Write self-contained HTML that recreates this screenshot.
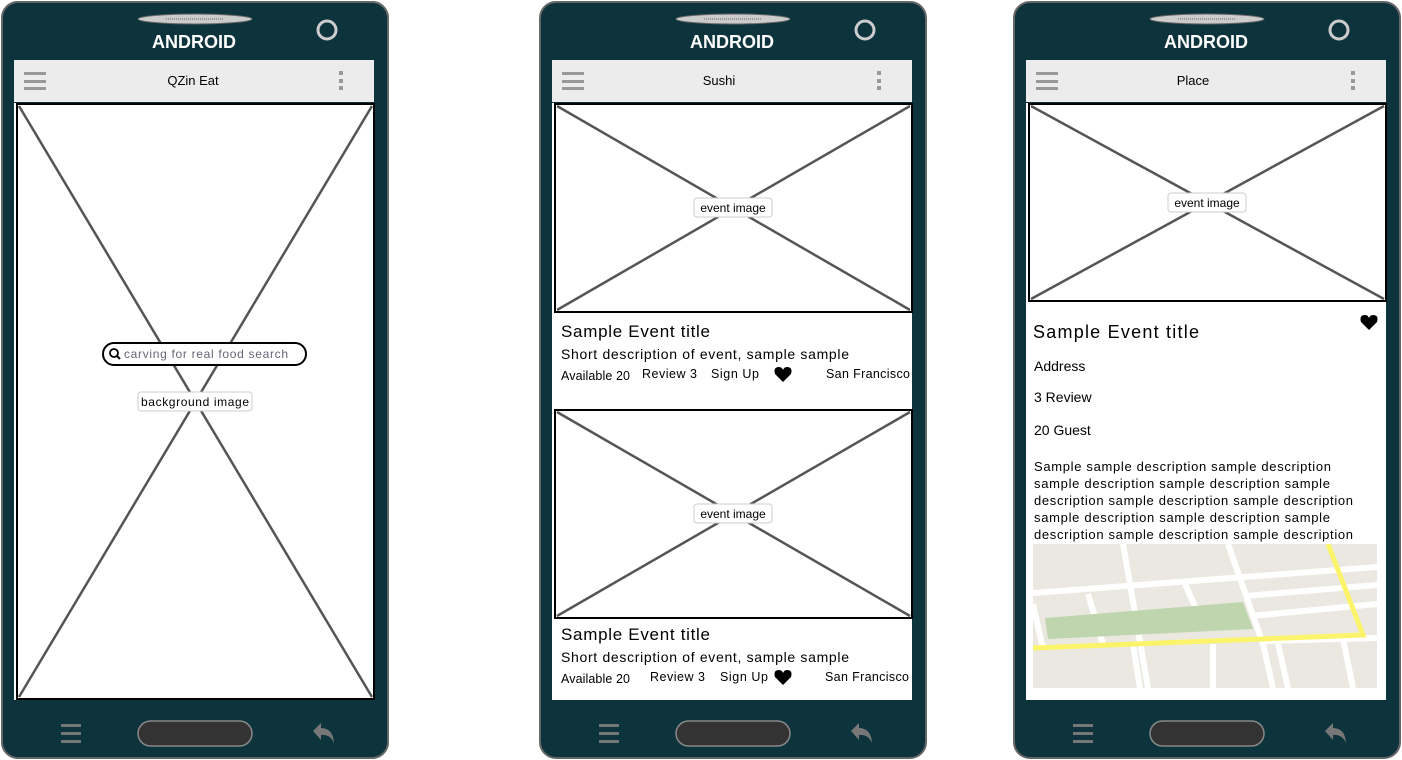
<!DOCTYPE html>
<html><head><meta charset="utf-8"><style>
html,body{margin:0;padding:0;background:#fff;}
svg{display:block;font-family:"Liberation Sans",sans-serif;}
</style></head><body>
<svg width="1402" height="760" viewBox="0 0 1402 760" xmlns="http://www.w3.org/2000/svg">
<defs>
<g id="shell">
  <rect x="1" y="2" width="386" height="756" rx="16" fill="#0d343d" stroke="#666" stroke-width="2"/>
  <ellipse cx="194" cy="19" rx="57" ry="5" fill="#ccc" stroke="#666"/>
  <line x1="165" y1="19" x2="222" y2="19" stroke="#666" stroke-dasharray="1 1"/>
  <circle cx="326" cy="30" r="9" fill="none" stroke="#ccc" stroke-width="3"/>
  <rect x="13" y="60" width="360" height="42" fill="#ececec"/>
  <rect x="23" y="72" width="22" height="3" fill="#999"/><rect x="23" y="80" width="22" height="3" fill="#999"/><rect x="23" y="87" width="22" height="3" fill="#999"/>
  <rect x="338" y="71" width="4" height="4" fill="#999"/><rect x="338" y="79" width="4" height="4" fill="#999"/><rect x="338" y="86" width="4" height="4" fill="#999"/>
  <rect x="13" y="103" width="360" height="597" fill="#fff"/>
  <rect x="60" y="724" width="20" height="3" fill="#777"/><rect x="60" y="732" width="20" height="3" fill="#777"/><rect x="60" y="740" width="20" height="3" fill="#777"/>
  <rect x="137" y="721" width="114" height="25" rx="12.5" fill="#333" stroke="#888" stroke-width="1.5"/>
  <path d="M312 731 L320 723 L320 728 Q332 728 333 743 Q329 734 320 735 L320 740 Z" fill="#777"/>
</g>
</defs>

<!-- Phone 1 -->
<g transform="translate(1,0)">
  <g><rect x="1" y="2" width="386" height="756" rx="16" fill="#0d343d" stroke="#666" stroke-width="2"/></g>
</g>
<g transform="translate(1,0)"><use href="#shell"/></g>
<g transform="translate(539,0)"><use href="#shell"/></g>
<g transform="translate(1013,0)"><use href="#shell"/></g>

<g font-weight="bold" fill="#fff" font-size="18" text-anchor="middle">
  <text x="194" y="48">ANDROID</text>
  <text x="732" y="48">ANDROID</text>
  <text x="1206" y="48">ANDROID</text>
</g>
<g font-size="13" fill="#000" text-anchor="middle">
  <text x="193" y="85">QZin Eat</text>
  <text x="719" y="85">Sushi</text>
  <text x="1193" y="85">Place</text>
</g>

<!-- phone1 image -->
<rect x="17" y="104" width="357" height="595" fill="#fff" stroke="#000" stroke-width="2"/>
<line x1="19" y1="106" x2="372" y2="697" stroke="#555" stroke-width="2.5"/>
<line x1="372" y1="106" x2="19" y2="697" stroke="#555" stroke-width="2.5"/>
<rect x="103" y="343" width="203" height="22" rx="11" fill="#fff" stroke="#000" stroke-width="2"/>
<circle cx="114" cy="353" r="4" fill="none" stroke="#000" stroke-width="1.8"/><line x1="117" y1="356" x2="120" y2="359" stroke="#000" stroke-width="2"/>
<text x="124" y="358" font-size="12" fill="#667" textLength="164">carving for real food search</text>
<rect x="138" y="392" width="114" height="19" rx="3" fill="#fff" stroke="#ccc"/>
<text x="195" y="406" font-size="12" text-anchor="middle" textLength="108">background image</text>

<!-- phone2 -->
<g stroke-width="2.5">
<rect x="555" y="104" width="357" height="208" fill="#fff" stroke="#000" stroke-width="2"/>
<line x1="557" y1="106" x2="910" y2="310" stroke="#555"/><line x1="910" y1="106" x2="557" y2="310" stroke="#555"/>
<rect x="555" y="410" width="357" height="208" fill="#fff" stroke="#000" stroke-width="2"/>
<line x1="557" y1="412" x2="910" y2="616" stroke="#555"/><line x1="910" y1="412" x2="557" y2="616" stroke="#555"/>
</g>
<rect x="694" y="198" width="78" height="19" rx="3" fill="#fff" stroke="#ccc"/>
<text x="733" y="212" font-size="12" text-anchor="middle">event image</text>
<rect x="694" y="504" width="78" height="19" rx="3" fill="#fff" stroke="#ccc"/>
<text x="733" y="518" font-size="12" text-anchor="middle">event image</text>
<g fill="#000">
<text x="561" y="337" font-size="17" textLength="149">Sample Event title</text>
<text x="561" y="359" font-size="14" textLength="288">Short description of event, sample sample</text>
<text x="561" y="380" font-size="12.5" textLength="69">Available 20</text>
<text x="642" y="378" font-size="12.5" textLength="55">Review 3</text>
<text x="711" y="378" font-size="12.5" textLength="48">Sign Up</text>
<text x="826" y="378" font-size="12.5" textLength="84">San Francisco</text>
<text x="561" y="640" font-size="17" textLength="149">Sample Event title</text>
<text x="561" y="662" font-size="14" textLength="288">Short description of event, sample sample</text>
<text x="561" y="683" font-size="12.5" textLength="69">Available 20</text>
<text x="650" y="681" font-size="12.5" textLength="55">Review 3</text>
<text x="720" y="681" font-size="12.5" textLength="48">Sign Up</text>
<text x="825" y="681" font-size="12.5" textLength="84">San Francisco</text>
</g>
<path id="h" d="M783 382 L775 374 Q773 367 779 367 Q782 367 783 370 Q784 367 787 367 Q793 367 791 374 Z" fill="#000"/>
<path d="M783 685 L775 677 Q773 670 779 670 Q782 670 783 673 Q784 670 787 670 Q793 670 791 677 Z" fill="#000"/>

<!-- phone3 -->
<rect x="1029" y="104" width="357" height="197" fill="#fff" stroke="#000" stroke-width="2"/>
<line x1="1031" y1="106" x2="1384" y2="299" stroke="#555" stroke-width="2.5"/><line x1="1384" y1="106" x2="1031" y2="299" stroke="#555" stroke-width="2.5"/>
<rect x="1168" y="193" width="78" height="19" rx="3" fill="#fff" stroke="#ccc"/>
<text x="1207" y="207" font-size="12" text-anchor="middle">event image</text>
<path d="M1369 330 L1361 322 Q1359 315 1365 315 Q1368 315 1369 318 Q1370 315 1373 315 Q1379 315 1377 322 Z" fill="#000"/>
<g fill="#000">
<text x="1033" y="338" font-size="18" textLength="166">Sample Event title</text>
<text x="1034" y="371" font-size="14">Address</text>
<text x="1034" y="402" font-size="14">3 Review</text>
<text x="1034" y="435" font-size="14">20 Guest</text>
<g font-size="13">
<text x="1034" y="471" textLength="297">Sample sample description sample description</text>
<text x="1034" y="488" textLength="296">sample description sample description sample</text>
<text x="1034" y="505" textLength="319">description sample description sample description</text>
<text x="1034" y="522" textLength="296">sample description sample description sample</text>
<text x="1034" y="539" textLength="319">description sample description sample description</text>
</g>
</g>
<!-- map -->
<svg x="1033" y="544" width="344" height="144" viewBox="0 0 344 144">
<rect width="344" height="144" fill="#ebe8e1"/>
<g stroke="#fff" stroke-width="6" fill="none">
<path d="M0 49 L344 23"/><path d="M212 52 L344 41"/><path d="M218 72 L344 60"/><path d="M230 97 L344 94"/>
<path d="M90 0 L115 144"/><path d="M195 0 L230 100 L240 144"/><path d="M55 50 L70 100"/><path d="M152 40 L170 80"/>
<path d="M0 60 L10 105"/><path d="M180 100 L180 144"/><path d="M245 100 L255 144"/><path d="M310 95 L320 144"/><path d="M100 100 L107 144"/>
</g>
<path d="M12 74 L210 58 L220 85 L15 95 Z" fill="#bfd5ad"/>
<g stroke="#fbf46b" stroke-width="5" fill="none"><path d="M0 104 L330 91 L295 0"/></g>
</svg>
</svg>
</body></html>
